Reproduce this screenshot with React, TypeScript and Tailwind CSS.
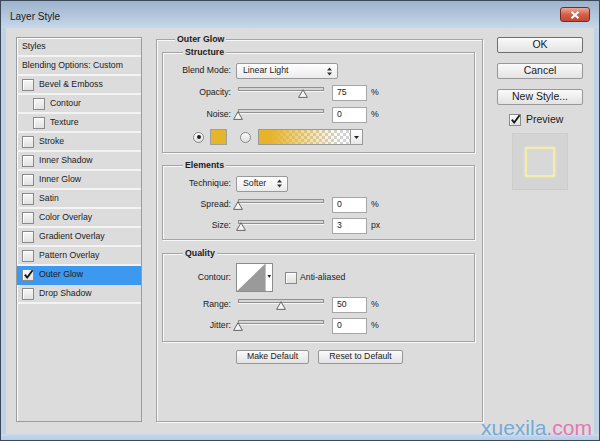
import React from "react";

const FONT = "[font-family:'Liberation_Sans',Arial,sans-serif]";

type StyleRow = {
  label: string;
  indent?: boolean;
  checked?: boolean;
  selected?: boolean;
};

const styleRows: StyleRow[] = [
  { label: "Bevel & Emboss" },
  { label: "Contour", indent: true },
  { label: "Texture", indent: true },
  { label: "Stroke" },
  { label: "Inner Shadow" },
  { label: "Inner Glow" },
  { label: "Satin" },
  { label: "Color Overlay" },
  { label: "Gradient Overlay" },
  { label: "Pattern Overlay" },
  { label: "Outer Glow", checked: true, selected: true },
  { label: "Drop Shadow" },
];

function Checkbox({ checked = false }: { checked?: boolean }) {
  return (
    <span className="relative flex h-[12px] w-[12px] shrink-0 border border-[#8a8a8a] bg-linear-to-b from-[#f7f7f7] to-[#e2e2e2] shadow-[inset_1px_1px_0_#fff]">
      {checked && (
        <svg
          width="11"
          height="11"
          viewBox="0 0 11 11"
          className="absolute left-0 top-[-1px]"
        >
          <path
            d="M1.8 5.6 L4.2 8.6 L9.6 1.2"
            fill="none"
            stroke="#151515"
            strokeWidth="1.8"
          />
        </svg>
      )}
    </span>
  );
}

function Radio({ on = false }: { on?: boolean }) {
  return (
    <span className="flex h-[11px] w-[11px] shrink-0 items-center justify-center rounded-full border border-[#8a8a8a] bg-linear-to-b from-[#fbfbfb] to-[#e0e0e0]">
      {on && <span className="h-[4px] w-[4px] rounded-full bg-[#1e1e1e]" />}
    </span>
  );
}

function UpDown() {
  return (
    <svg width="5" height="9" viewBox="0 0 5 9">
      <path d="M0 3.6 L2.5 0.6 L5 3.6 Z" fill="#333" />
      <path d="M0 5.4 L2.5 8.4 L5 5.4 Z" fill="#333" />
    </svg>
  );
}

function Dropdown({ value, width }: { value: string; width: string }) {
  return (
    <div
      className={`flex h-[16px] items-center justify-between rounded-[2px] border border-[#999] bg-linear-to-b from-white to-[#ebebeb] pl-[6px] pr-[5px] ${width}`}
    >
      <span>{value}</span>
      <UpDown />
    </div>
  );
}

function Slider({ value }: { value: number }) {
  return (
    <div className="relative h-[16px] w-[90px] shrink-0">
      <div className="absolute left-[2px] right-[2px] top-[2px] h-[4px] border border-[#909090] bg-[#d6d6d6] shadow-[0_1px_0_#f6f6f6]" />
      <svg
        className="absolute top-[4px]"
        style={{ left: 2 + value * 0.86 - 5 }}
        width="10"
        height="9"
        viewBox="0 0 10 9"
      >
        <path d="M5 0.7 L9.4 8.4 H0.6 Z" fill="#f5f5f5" stroke="#666" />
      </svg>
    </div>
  );
}

function NumberBox({ value }: { value: string }) {
  return (
    <div className="ml-[6px] flex h-[16px] w-[35px] shrink-0 items-center border border-[#a6a6a6] bg-white pl-[4px]">
      {value}
    </div>
  );
}

function Label({ text }: { text: string }) {
  return (
    <span className="mr-[5px] w-[68px] shrink-0 text-right">{text}</span>
  );
}

function SliderRow({
  label,
  value,
  unit,
  height,
}: {
  label: string;
  value: number;
  unit: string;
  height: string;
}) {
  return (
    <div className={`flex items-center ${height}`}>
      <Label text={label} />
      <Slider value={value} />
      <NumberBox value={String(value)} />
      <span className="ml-[4px]">{unit}</span>
    </div>
  );
}

function DialogButton({
  label,
  primary = false,
  className = "",
}: {
  label: string;
  primary?: boolean;
  className?: string;
}) {
  return (
    <div
      className={`flex items-center justify-center rounded-[2px] border bg-linear-to-b from-[#fafafa] to-[#e3e3e3] ${
        primary ? "border-[#6f6f6f]" : "border-[#979797]"
      } ${className}`}
    >
      {label}
    </div>
  );
}

function ContourThumb() {
  return (
    <svg width="37" height="29" viewBox="0 0 37 29" className="shrink-0">
      <rect x="0.5" y="0.5" width="36" height="28" fill="#fff" stroke="#8c8c8c" />
      <path d="M1 28 L29 1 L29 28 Z" fill="#9a9a9a" />
      <line x1="29.5" y1="1" x2="29.5" y2="28" stroke="#c4c4c4" />
      <path d="M31.5 12 L35 12 L33.25 15 Z" fill="#222" />
    </svg>
  );
}

const groupBox =
  "border border-[#a4a4a4] shadow-[inset_1px_1px_0_#f8f8f8,1px_1px_0_#f8f8f8]";
const legendCls =
  "ml-[20px] bg-[#dcdcdc] px-[2px] text-[8.8px] font-bold leading-[12px]";

export default function App() {
  return (
    <div
      className={`relative flex h-[441px] w-[600px] flex-col overflow-hidden border border-[#3b4858] bg-[#bed2e8] text-[8.7px] text-[#1b1b1b] ${FONT}`}
    >
      {/* title bar */}
      <div className="flex h-[27px] shrink-0 items-start justify-between bg-linear-to-b from-[#9db2cc] to-[#c6d7ea]">
        <span className="pl-[9px] pt-[10px] text-[10px] leading-[12px] text-[#1a1a1a]">
          Layer Style
        </span>
        <div className="mr-[9px] mt-[6px] flex h-[15px] w-[30px] items-center justify-center rounded-[3px] border border-[#7a2c22] bg-linear-to-b from-[#eaa696] via-[#d4614c] to-[#c24733]">
          <svg width="10" height="8" viewBox="0 0 10 8">
            <path
              d="M1.5 0.8 L8.5 7.2 M8.5 0.8 L1.5 7.2"
              stroke="#fff"
              strokeWidth="2"
            />
          </svg>
        </div>
      </div>

      {/* dialog body */}
      <div className="mx-[5px] flex h-[406px] shrink-0 items-start bg-[#dcdcdc] pl-[10px] pt-[9px]">
        {/* styles list */}
        <div className="flex h-[385px] w-[126px] shrink-0 flex-col border border-[#9c9c9c] shadow-[inset_1px_1px_0_#fff]">
          <div className="flex h-[19px] shrink-0 items-center border-b-2 border-[#f3f3f3] pl-[5px]">
            Styles
          </div>
          <div className="flex h-[19px] shrink-0 items-center border-b-2 border-[#f3f3f3] pl-[5px]">
            Blending Options: Custom
          </div>
          {styleRows.map((row) => (
            <div
              key={row.label}
              className={`flex h-[19px] shrink-0 items-center border-b-2 ${
                row.selected
                  ? "border-[#3d98f0] bg-[#3d98f0]"
                  : "border-[#f3f3f3]"
              } ${row.indent ? "pl-[16px]" : "pl-[5px]"}`}
            >
              <Checkbox checked={row.checked} />
              <span className="ml-[5px]">{row.label}</span>
            </div>
          ))}
        </div>

        {/* outer glow settings */}
        <fieldset className={`-mt-[4px] ml-[14px] h-[389px] w-[327px] shrink-0 ${groupBox}`}>
          <legend className="ml-[18px] bg-[#dcdcdc] px-[2px] text-[8.8px] font-bold leading-[12px]">
            Outer Glow
          </legend>

          <fieldset className={`ml-[5px] mt-[1px] w-[313px] pb-[4px] pt-[2px] ${groupBox}`}>
            <legend className={legendCls}>Structure</legend>
            <div className="flex h-[22px] items-center">
              <Label text="Blend Mode:" />
              <Dropdown value="Linear Light" width="w-[102px]" />
            </div>
            <SliderRow label="Opacity:" value={75} unit="%" height="h-[22px]" />
            <SliderRow label="Noise:" value={0} unit="%" height="h-[22px]" />
            <div className="flex h-[22px] items-center pl-[30px]">
              <Radio on />
              <span className="ml-[6px] h-[16px] w-[17px] shrink-0 border border-[#a0a0a0] bg-[#e6b52b]" />
              <span className="ml-[13px]">
                <Radio />
              </span>
              <div className="ml-[7px] flex h-[16px] shrink-0 border border-[#999]">
                <span className="h-full w-[91px] [background:linear-gradient(90deg,#e6b32a_0%,#e6b32a_12%,rgba(230,179,42,0)_88%),repeating-conic-gradient(#d2d2d2_0_25%,#fff_0_50%)_0_0/6px_6px]" />
                <span className="flex w-[12px] items-center justify-center border-l border-[#999] bg-linear-to-b from-white to-[#e8e8e8]">
                  <svg width="5" height="3" viewBox="0 0 5 3">
                    <path d="M0 0 H5 L2.5 3 Z" fill="#222" />
                  </svg>
                </span>
              </div>
            </div>
          </fieldset>

          <fieldset className={`ml-[5px] mt-[6px] w-[313px] pb-[3px] pt-[2px] ${groupBox}`}>
            <legend className={legendCls}>Elements</legend>
            <div className="flex h-[21px] items-center">
              <Label text="Technique:" />
              <Dropdown value="Softer" width="w-[52px]" />
            </div>
            <SliderRow label="Spread:" value={0} unit="%" height="h-[21px]" />
            <SliderRow label="Size:" value={3} unit="px" height="h-[21px]" />
          </fieldset>

          <fieldset className={`ml-[5px] mt-[7px] w-[313px] pb-[4px] pt-[2px] ${groupBox}`}>
            <legend className={legendCls}>Quality</legend>
            <div className="flex h-[33px] items-center">
              <Label text="Contour:" />
              <ContourThumb />
              <span className="ml-[12px]">
                <Checkbox />
              </span>
              <span className="ml-[3px]">Anti-aliased</span>
            </div>
            <SliderRow label="Range:" value={50} unit="%" height="h-[21px]" />
            <SliderRow label="Jitter:" value={0} unit="%" height="h-[22px]" />
          </fieldset>

          <div className="ml-[79px] mt-[8px] flex gap-[9px]">
            <DialogButton label="Make Default" className="h-[14px] w-[73px]" />
            <DialogButton label="Reset to Default" className="h-[14px] w-[85px]" />
          </div>
        </fieldset>

        {/* right column */}
        <div className="ml-[14px] flex w-[86px] shrink-0 flex-col text-[10.5px]">
          <DialogButton label="OK" primary className="h-[16px]" />
          <DialogButton label="Cancel" className="mt-[10px] h-[16px]" />
          <DialogButton label="New Style..." className="mt-[10px] h-[16px]" />
          <div className="ml-[12px] mt-[8px] flex h-[14px] items-center">
            <Checkbox checked />
            <span className="ml-[5px]">Preview</span>
          </div>
          <div className="ml-[15px] mt-[6px] flex h-[57px] w-[56px] items-center justify-center border border-[#cdcdcd] bg-[#d4d4d4]">
            <div className="h-[30px] w-[30px] border-2 border-[#f2eda8] bg-[#d8d8d8] shadow-[0_0_2px_#f6f2c0]" />
          </div>
        </div>
      </div>

      {/* bottom frame */}
      <div className="flex-1 bg-linear-to-b from-[#c9dbee] to-[#b5cce4]" />

      <span className="absolute left-[480px] top-[416px] text-[21px] leading-none">
        <span className="text-[#72abdb]">xuexila</span>
        <span className="text-[#e476b4]">.com</span>
      </span>
    </div>
  );
}
